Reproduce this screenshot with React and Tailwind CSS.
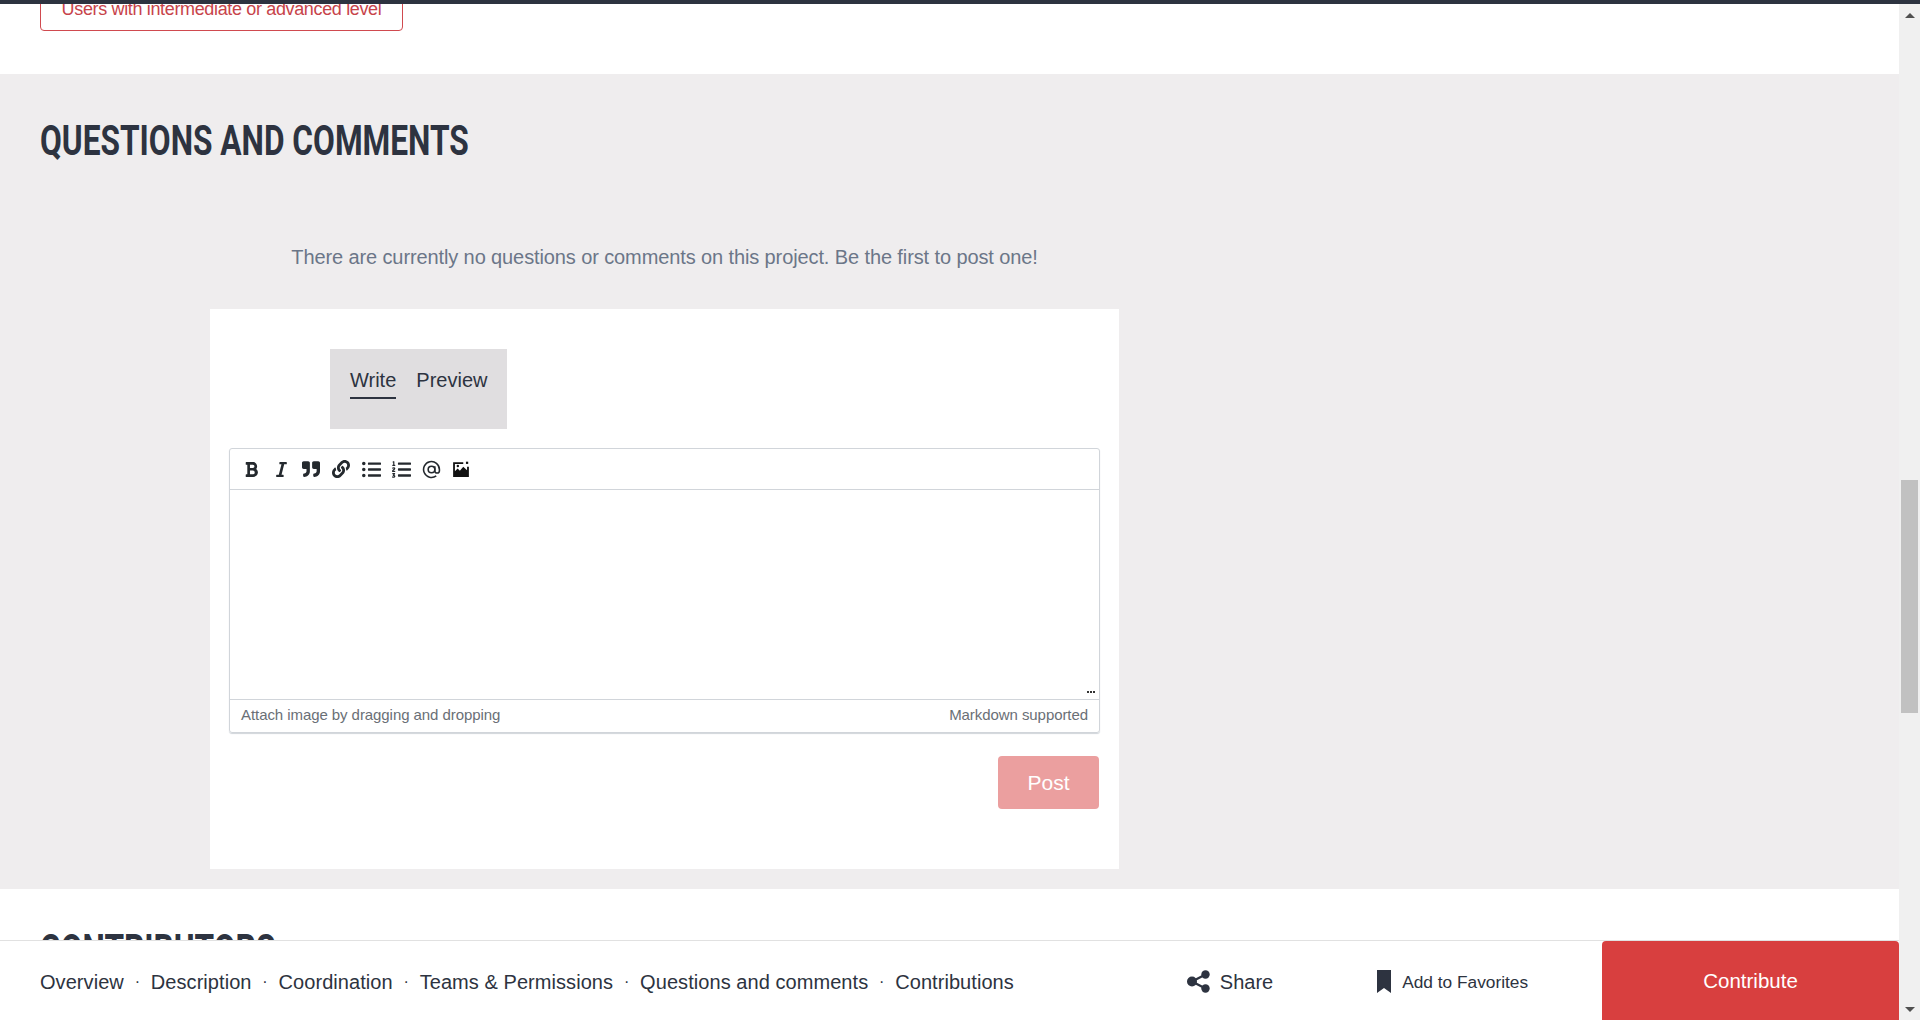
import React from "react";
import { FaBold, FaItalic, FaQuoteRight, FaLink, FaListUl, FaListOl } from "react-icons/fa";

const sans = "font-['Liberation_Sans',Arial,sans-serif]";
const heading = "font-['Roboto',sans-serif] font-bold uppercase text-[#2d3340] text-[43px] leading-[48px] origin-left scale-x-[0.736] whitespace-nowrap";

const navItems = ["Overview", "Description", "Coordination", "Teams & Permissions", "Questions and comments", "Contributions"];

function AtIcon() {
  return (
    <svg width="19" height="19" viewBox="0 0 24 24" fill="none" stroke="#24292e" strokeWidth="2">
      <circle cx="12" cy="12" r="4.2" />
      <path d="M16.2 8v5.5a2.9 2.9 0 0 0 5.8 0V12a10 10 0 1 0-4 8" />
    </svg>
  );
}

function ImageIcon() {
  return (
    <svg width="18" height="18" viewBox="0 0 16 16">
      <path d="M1 2h9v1.6H2.6v6.4L5 7.5l2 2 3-3.5 3.4 3V6H15v9H1z" fill="#111" />
      <circle cx="5.2" cy="5.4" r="1.1" fill="#111" />
      <rect x="12.4" y="1.5" width="2" height="2" fill="#111" />
    </svg>
  );
}

function ShareIcon() {
  return (
    <svg width="23" height="23" viewBox="0 0 23 23" fill="#2d3340">
      <circle cx="5" cy="11.5" r="5" />
      <circle cx="18.5" cy="4.5" r="4.2" />
      <circle cx="18.5" cy="18.5" r="4.2" />
      <path d="M5 11.5L18.5 4.5M5 11.5L18.5 18.5" stroke="#2d3340" strokeWidth="2.4" />
    </svg>
  );
}

function BookmarkIcon() {
  return (
    <svg width="14" height="23" viewBox="0 0 14 23" fill="#2d3340">
      <path d="M0 0h14v23l-7-5-7 5z" />
    </svg>
  );
}

export default function App() {
  const tools = [
    <FaBold key="b" size={17} />,
    <FaItalic key="i" size={17} />,
    <FaQuoteRight key="q" size={18} />,
    <FaLink key="l" size={18} />,
    <FaListUl key="u" size={19} />,
    <FaListOl key="o" size={19} />,
    <AtIcon key="a" />,
    <ImageIcon key="m" />,
  ];
  return (
    <div className={`${sans} flex h-[1020px] w-full flex-col overflow-hidden bg-white`}>
      <div className="h-1 shrink-0 bg-[#2d3340]" />
      <div className="flex min-h-0 flex-1">
        <div className="flex min-w-0 flex-1 flex-col">
          <div className="min-h-0 flex-1 overflow-hidden">
            <div className="flex h-[70px] flex-col px-10">
              <div className="-mt-[17px] flex h-[44px] w-[363px] shrink-0 items-center justify-center rounded-sm border border-[#d04a4f] text-[18px] tracking-[-0.35px] text-[#c7434a]">
                Users with intermediate or advanced level
              </div>
            </div>
            <section className="h-[815px] bg-[#efedee] px-10 pt-[42px]">
              <h2 className={heading}>Questions and comments</h2>
              <div className="ml-[170px] w-[909px]">
                <p className="mt-[80px] text-center text-[20px] leading-[27px] tracking-[-0.11px] text-[#6b7688]">
                  There are currently no questions or comments on this project. Be the first to post one!
                </p>
                <div className="mt-[38px] h-[560px] bg-white px-[19px] pt-[40px]">
                  <div className="ml-[101px] flex h-[80px] w-[177px] gap-5 bg-[#e0dee0] px-5 pt-[16px] text-[20px] leading-[30px] text-[#2d3340]">
                    <span className="h-[34px] border-b-2 border-[#2d3340]">Write</span>
                    <span>Preview</span>
                  </div>
                  <div className="mt-[19px] h-[285px] w-[871px] rounded-[3px] border border-[#d1d5da] shadow-[0_1px_1px_#d1d5da]">
                    <div className="flex h-[41px] items-center gap-[14px] border-b border-[#d1d5da] pl-[13px] text-[#24292e]">
                      {tools.map((t, i) => (
                        <span key={i} className="flex h-4 w-4 items-center justify-center [&>svg]:shrink-0">{t}</span>
                      ))}
                    </div>
                    <div className="relative h-[210px] border-b border-[#d1d5da]">
                      <div className="absolute bottom-[6px] right-[4px] flex gap-[1px]">
                        <span className="h-[2px] w-[2px] bg-[#333]" />
                        <span className="h-[2px] w-[2px] bg-[#333]" />
                        <span className="h-[2px] w-[2px] bg-[#333]" />
                      </div>
                    </div>
                    <div className="flex h-[31px] items-center justify-between px-[11px] text-[15px] tracking-[-0.07px] text-[#6a6f76]">
                      <span>Attach image by dragging and dropping</span>
                      <span>Markdown supported</span>
                    </div>
                  </div>
                  <div className="mt-[23px] flex w-[870px] justify-end">
                    <button className="flex h-[53px] w-[101px] items-center justify-center rounded-sm bg-[#eb9f9f] text-[21px] font-medium text-white">Post</button>
                  </div>
                </div>
              </div>
            </section>
            <h2 className={`${heading} ml-10 mt-[36px]`}>Contributors</h2>
          </div>
          <footer className="flex h-[80px] shrink-0 border-t border-[#e1e1e1] bg-white">
            <nav className="flex items-center pl-10 pt-[3px] text-[20px] tracking-[0.06px] text-[#2d3340]">
              {navItems.map((n, i) => (
                <React.Fragment key={n}>
                  {i > 0 && <span className="w-[27px] text-center text-[16px]">·</span>}
                  <span>{n}</span>
                </React.Fragment>
              ))}
            </nav>
            <div className="ml-[173px] flex items-center gap-[10px] pt-[2px]">
              <ShareIcon />
              <span className="text-[20px] text-[#2d3340]">Share</span>
            </div>
            <div className="ml-[104px] flex items-center gap-[11px] pt-[2px]">
              <BookmarkIcon />
              <span className="pt-[2px] text-[17.3px] text-[#2d3340]">Add to Favorites</span>
            </div>
            <button className="ml-auto h-full w-[297px] rounded-t-sm bg-[#d83f3f] pt-[1px] text-[20.5px] font-medium text-white">Contribute</button>
          </footer>
        </div>
        <div className="flex w-[21px] shrink-0 flex-col items-center bg-[#f0f0f0]">
          <div className="mt-[9px] h-0 w-0 border-x-[5px] border-b-[5px] border-x-transparent border-b-[#505050]" />
          <div className="mt-[462px] h-[233px] w-[17px] bg-[#c1c1c1]" />
          <div className="mt-[294px] h-0 w-0 border-x-[5px] border-t-[5px] border-x-transparent border-t-[#505050]" />
        </div>
      </div>
    </div>
  );
}
